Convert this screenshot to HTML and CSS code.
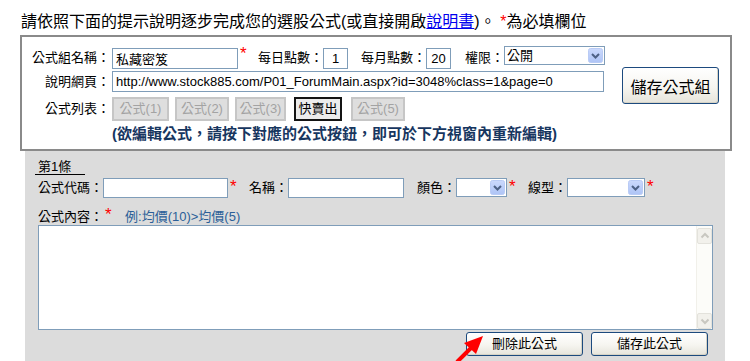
FILE: index.html
```html
<!DOCTYPE html>
<html>
<head>
<meta charset="utf-8">
<link rel="stylesheet" href="styles.css">
</head>
<body>
<div class="page">
  <div class="title">請依照下面的提示說明逐步完成您的選股公式(或直接開啟<a href="#" class="link">說明書</a>)。 <span class="req">*</span>為必填欄位</div>

  <div class="group-box">
    <div class="fields">
      <div class="row row1">
        <span class="lbl">公式組名稱：</span>
        <input class="inp inp-name" value="私藏密笈">
        <span class="star">*</span>
        <span class="lbl2 ml10">每日點數：</span>
        <input class="inp inp-num" value="1">
        <span class="lbl2 ml13">每月點數：</span>
        <input class="inp inp-num" value="20">
        <span class="lbl2 ml14">權限：</span>
        <div class="sel sel-perm">
          <span class="sel-text">公開</span>
          <span class="sel-btn"><svg width="15" height="15" viewBox="0 0 15 15"><defs><linearGradient id="g1" x1="0" y1="0" x2="0" y2="1"><stop offset="0" stop-color="#cbd9fc"/><stop offset="1" stop-color="#aec4f6"/></linearGradient></defs><rect x="0.5" y="0.5" width="14" height="14" rx="2" fill="url(#g1)" stroke="#b9cbf5"/><polyline points="4,6 7.5,9.5 11,6" fill="none" stroke="#4d6185" stroke-width="2"/></svg></span>
        </div>
      </div>
      <div class="row row2">
        <span class="lbl">說明網頁：</span>
        <input class="inp inp-url" value="http://www.stock885.com/P01_ForumMain.aspx?id=3048%class=1&amp;page=0">
      </div>
      <div class="row row3">
        <span class="lbl">公式列表：</span>
        <button class="fbtn off b1">公式(1)</button>
        <button class="fbtn off b2">公式(2)</button>
        <button class="fbtn off b3">公式(3)</button>
        <button class="fbtn on b4">快賣出</button>
        <button class="fbtn off b5">公式(5)</button>
      </div>
      <div class="note">(欲編輯公式，請按下對應的公式按鈕，即可於下方視窗內重新編輯)</div>
    </div>
    <div class="side">
      <button class="xpbtn big">儲存公式組</button>
    </div>
  </div>

  <div class="panel">
    <div class="heading">第1條</div>
    <div class="row row-code">
      <span class="lbl3">公式代碼：</span>
      <input class="inp inp-code" value="">
      <span class="star">*</span>
      <span class="lbl3 ml11">名稱：</span>
      <input class="inp inp-title" value="">
      <span class="lbl3 ml13">顏色：</span>
      <div class="sel sel-color">
        <span class="sel-text"></span>
        <span class="sel-btn"><svg width="15" height="15" viewBox="0 0 15 15"><defs><linearGradient id="g2" x1="0" y1="0" x2="0" y2="1"><stop offset="0" stop-color="#cbd9fc"/><stop offset="1" stop-color="#aec4f6"/></linearGradient></defs><rect x="0.5" y="0.5" width="14" height="14" rx="2" fill="url(#g2)" stroke="#b9cbf5"/><polyline points="4,6 7.5,9.5 11,6" fill="none" stroke="#4d6185" stroke-width="2"/></svg></span>
      </div>
      <span class="star">*</span>
      <span class="lbl3 ml11">線型：</span>
      <div class="sel sel-line">
        <span class="sel-text"></span>
        <span class="sel-btn"><svg width="15" height="15" viewBox="0 0 15 15"><defs><linearGradient id="g3" x1="0" y1="0" x2="0" y2="1"><stop offset="0" stop-color="#cbd9fc"/><stop offset="1" stop-color="#aec4f6"/></linearGradient></defs><rect x="0.5" y="0.5" width="14" height="14" rx="2" fill="url(#g3)" stroke="#b9cbf5"/><polyline points="4,6 7.5,9.5 11,6" fill="none" stroke="#4d6185" stroke-width="2"/></svg></span>
      </div>
      <span class="star">*</span>
    </div>
    <div class="content-row">
      <span class="lbl3">公式內容：</span><span class="star star-inline">*</span>
      <span class="example">例:均價(10)&gt;均價(5)</span>
    </div>
    <div class="textbox">
      <div class="tb-area"></div>
      <div class="scrollbar">
        <span class="sb-btn"><svg width="14" height="14" viewBox="0 0 14 14"><polyline points="3.5,8.5 7,5 10.5,8.5" fill="none" stroke="#c8c7c0" stroke-width="2"/></svg></span>
        <span class="sb-btn"><svg width="14" height="14" viewBox="0 0 14 14"><polyline points="3.5,5.5 7,9 10.5,5.5" fill="none" stroke="#c8c7c0" stroke-width="2"/></svg></span>
      </div>
    </div>
    <div class="actions">
      <button class="xpbtn small">刪除此公式</button>
      <button class="xpbtn small">儲存此公式</button>
    </div>
  </div>

  <svg class="arrow" width="40" height="31" viewBox="0 0 40 31">
    <line x1="7" y1="32" x2="21" y2="18" stroke="#ff0000" stroke-width="4"/>
    <polygon points="33,6 14,13 26,24" fill="#ff0000"/>
  </svg>
</div>
</body>
</html>
```

FILE: styles.css
```css
* { box-sizing: border-box; }
html, body { margin: 0; padding: 0; background: #fff; overflow: hidden; }
body {
  font-family: "Liberation Sans", "Noto Sans CJK TC", sans-serif;
  font-size: 13px;
  color: #000;
}
.page { position: relative; width: 750px; height: 361px; padding: 12px 0 0 20px; }

.title { font-size: 16px; line-height: 20px; margin: 0 0 3px 1px; white-space: nowrap; }
.link { color: #0000ee; text-decoration: underline; }
.req { color: #ff0000; }

.group-box {
  width: 712px; height: 116px;
  border: 2px solid #8a8a8a;
  display: flex;
}
.fields { flex: 1; padding-top: 9px; }
.side { width: 108px; padding-top: 30px; }

.row { display: flex; align-items: center; white-space: nowrap; }
.row1 { height: 23px; }
.row2 { height: 21px; margin-top: 2px; }
.row3 { height: 24px; margin-top: 5px; }

.lbl { width: 88px; margin-right: 2px; text-align: right; line-height: 16px; flex: none; }
.lbl2, .lbl3 { line-height: 16px; flex: none; }
.ml10 { margin-left: 10px; }
.ml11 { margin-left: 11px; }
.ml13 { margin-left: 13px; }
.ml14 { margin-left: 14px; }

.inp {
  font-family: "Liberation Sans", "Noto Sans CJK TC", sans-serif;
  font-size: 13px;
  color: #000;
  border: 1px solid #7f9db9;
  background: #fff;
  padding: 0 3px;
  margin: 0;
  outline: none;
  flex: none;
}
.row1 .inp { height: 21px; align-self: flex-end; }
.inp-name { width: 126px; }
.inp-num { width: 25px; text-align: center; padding: 0; }
.inp-url { width: 492px; height: 21px; }

.star {
  color: #ff0000; font-size: 17px; line-height: 16px;
  align-self: flex-start; width: 10px; padding-left: 2px; flex: none;
}

.sel {
  display: flex; align-items: center; justify-content: space-between;
  height: 19px; border: 1px solid #7f9db9; background: #fff;
  padding: 0 1px 0 2px; flex: none;
}
.row1 .sel { align-self: flex-start; }
.sel-text { font-size: 13px; line-height: 16px; }
.sel-btn { display: block; width: 15px; height: 15px; }
.sel-btn svg { display: block; }
.sel-perm { width: 101px; }
.sel-color { width: 51px; }
.sel-line { width: 78px; }

.fbtn {
  font-family: "Liberation Sans", "Noto Sans CJK TC", sans-serif;
  font-size: 13px; height: 24px; margin: 0 6px 0 0;
  line-height: 18px; flex: none; padding: 0;
  text-align: center;
}
.fbtn.off {
  color: #a3a3a3;
  background: #dedede;
  border: 2px solid #c6c6c6;
}
.fbtn.on {
  margin: 0 9px 0 2px;
  color: #000;
  background: #ececec;
  border: 2px solid #141414;
}
.b1 { width: 57px; }
.b2 { width: 54px; }
.b3 { width: 51px; }
.b4 { width: 48px; }
.b5 { width: 54px; }

.note {
  margin-top: 3px; padding-left: 90px;
  font-size: 15px; line-height: 20px; font-weight: bold;
  color: #17365f; white-space: nowrap;
}

.xpbtn {
  font-family: "Liberation Sans", "Noto Sans CJK TC", sans-serif;
  color: #000;
  border: 1px solid #1c4a7e;
  border-radius: 3px;
  background: linear-gradient(#ffffff 0%, #f6f5f0 55%, #e6e4db 100%);
  box-shadow: inset -1px -1px 0 #d6d3c6;
  padding: 0;
  margin: 0;
}
.xpbtn.big { width: 97px; height: 37px; font-size: 16px; }
.xpbtn.small { width: 117px; height: 24px; font-size: 13px; line-height: 18px; }

.panel {
  margin-left: 5px; width: 700px; height: 210px;
  background: #dcdcdc;
  padding: 8px 0 0 10px;
}
.heading {
  width: 50px; padding-left: 3px;
  line-height: 15px; border-bottom: 1px solid #000;
}
.row-code { margin-top: 3px; height: 20px; align-items: flex-start; padding-left: 3px; }
.row-code .lbl3 { line-height: 20px; }
.row-code .inp { height: 20px; }
.inp-code { width: 125px; }
.inp-title { width: 116px; }
.row-code .star { margin-top: 1px; }

.content-row {
  margin-top: 11px; padding-left: 3px; height: 16px;
  display: flex; align-items: flex-start; white-space: nowrap;
}
.star-inline { margin-top: -2px; }
.example { color: #2b5f98; margin-left: 12px; line-height: 16px; }

.textbox {
  margin-left: 3px; width: 675px; height: 105px;
  border: 1px solid #7f9db9; background: #fff;
  display: flex;
}
.tb-area { flex: 1; }
.scrollbar {
  width: 16px; background: #fcfcf9;
  border-left: 1px solid #f1f0ea;
  display: flex; flex-direction: column; justify-content: space-between;
  padding: 2px 0 0 0;
}
.sb-btn {
  display: block; width: 15px; height: 16px;
  background: #f2f1ec; border: 1px solid #e3e2dc; border-radius: 2px;
}
.sb-btn svg { display: block; }

.actions {
  width: 678px; margin-top: 2px; padding-right: 5px;
  display: flex; justify-content: flex-end; gap: 8px;
}

.arrow { position: absolute; left: 450px; top: 330px; }
```
